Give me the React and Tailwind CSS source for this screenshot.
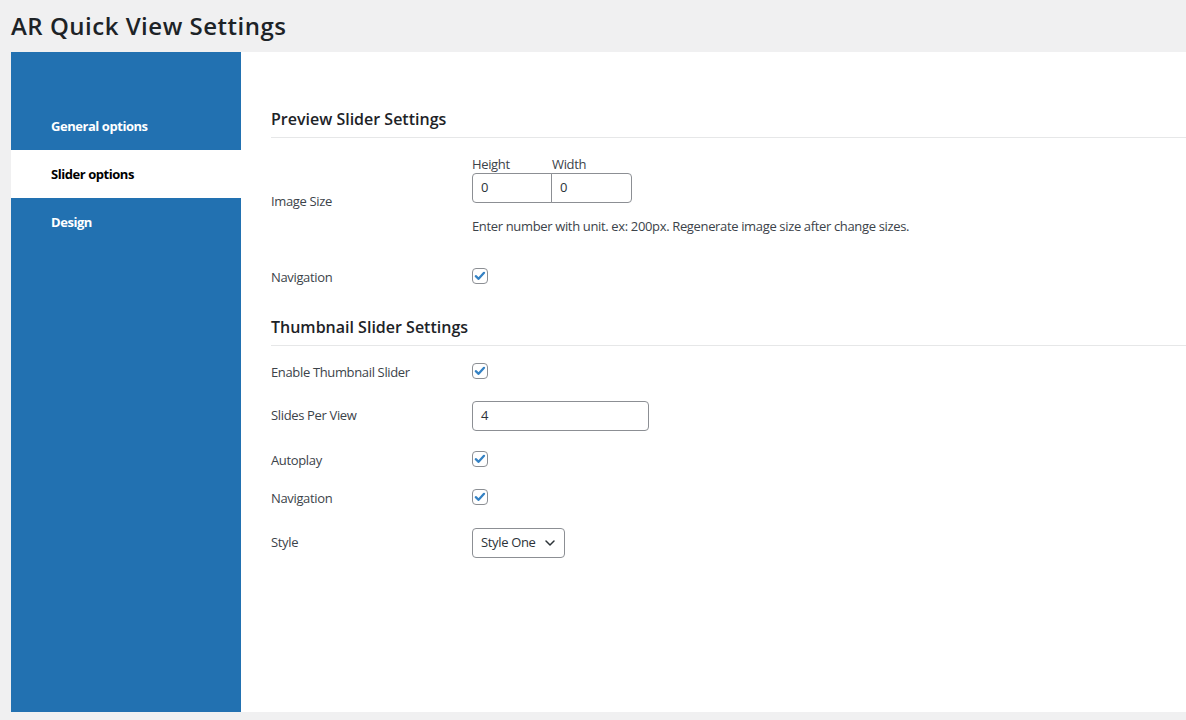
import { ChevronDown } from 'lucide-react';

const menu = [
  { id: 'general', label: 'General options' },
  { id: 'slider', label: 'Slider options', active: true },
  { id: 'design', label: 'Design' },
];

function Checkbox() {
  return (
    <span className="inline-flex h-4 w-4 items-center justify-center rounded-[4px] border border-[#8c8f94] bg-white">
      <svg viewBox="0 0 16 16" className="h-[14px] w-[14px]">
        <path d="M3.2 8.2 L6.4 11.2 L12.6 4.4" fill="none" stroke="#3582c4" strokeWidth="2.6" strokeLinecap="round" strokeLinejoin="round" />
      </svg>
    </span>
  );
}

function SectionTitle({ children, className = '' }) {
  return (
    <h2 className={`border-b border-[#e6e7e8] pb-[3px] text-[16px] font-semibold leading-[30px] tracking-normal text-[#1d2327] ${className}`}>
      {children}
    </h2>
  );
}

function Row({ label, className = '', children }) {
  return (
    <div className={`flex items-center ${className}`}>
      <div className="w-[201px] shrink-0">{label}</div>
      <div>{children}</div>
    </div>
  );
}

export default function App() {
  return (
    <div className="min-h-screen bg-[#f0f0f1] text-[13px] tracking-[-0.35px] text-[#3c434a] font-['Open_Sans',sans-serif]">
      <h1 className="flex h-[52px] items-center pl-[11px] text-[24px] font-semibold tracking-[0.5px] text-[#1d2327]">
        AR Quick View Settings
      </h1>

      <div className="ml-[11px] flex h-[660px]">
        {/* side tabs */}
        <nav className="w-[230px] shrink-0 bg-[#2271b1] pt-[50px]">
          {menu.map((item) => (
            <div
              key={item.id}
              className={`flex h-12 items-center pl-10 pt-[2px] font-bold tracking-[-0.45px] ${
                item.active ? 'bg-white text-black' : 'text-white'
              }`}
            >
              {item.label}
            </div>
          ))}
        </nav>

        {/* settings panel */}
        <main className="flex-1 bg-white pl-[30px] pt-[52px]">
          <SectionTitle>Preview Slider Settings</SectionTitle>

          <div className="flex">
            <div className="w-[201px] shrink-0 pt-[54px] leading-[18px]">Image Size</div>
            <div className="pt-[17px]">
              <div className="flex leading-[18px]">
                <span className="w-20">Height</span>
                <span className="w-20">Width</span>
              </div>
              <div className="flex">
                <div className="flex h-[30px] w-20 items-center rounded-l-[4px] border border-[#8c8f94] px-2 text-[#2c3338]">0</div>
                <div className="-ml-px flex h-[30px] w-[81px] items-center rounded-r-[4px] border border-[#8c8f94] px-2 text-[#2c3338]">0</div>
              </div>
              <p className="mt-[14px] leading-[18px]">
                Enter number with unit. ex: 200px. Regenerate image size after change sizes.
              </p>
            </div>
          </div>

          <Row label="Navigation" className="mt-[34px] h-[18px]">
            <Checkbox />
          </Row>

          <SectionTitle className="mt-[25px]">Thumbnail Slider Settings</SectionTitle>

          <Row label="Enable Thumbnail Slider" className="mt-[18px] h-[18px]">
            <Checkbox />
          </Row>

          <Row label="Slides Per View" className="mt-[19px] h-[30px]">
            <div className="flex h-[30px] w-[177px] items-center rounded-[4px] border border-[#8c8f94] px-2 text-[#2c3338]">4</div>
          </Row>

          <Row label="Autoplay" className="mt-[21px] h-[18px]">
            <Checkbox />
          </Row>

          <Row label="Navigation" className="mt-[20px] h-[18px]">
            <Checkbox />
          </Row>

          <Row label="Style" className="mt-[20px] h-[30px]">
            <div className="flex h-[30px] w-[93px] items-center justify-between rounded-[4px] border border-[#8c8f94] pl-2 pr-[6px] text-[#2c3338]">
              <span>Style One</span>
              <ChevronDown size={16} strokeWidth={2.25} className="text-[#2c3338]" />
            </div>
          </Row>
        </main>
      </div>
    </div>
  );
}
